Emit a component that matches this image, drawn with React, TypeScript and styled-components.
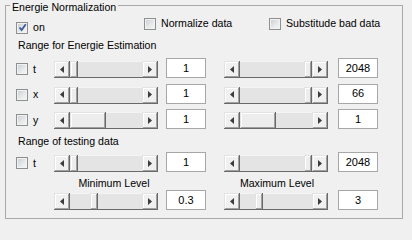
import styled, { createGlobalStyle } from 'styled-components';

const TRACK = 72;

const GlobalStyle = createGlobalStyle`
  html, body {
    margin: 0;
    padding: 0;
    background: #f0f0f0;
  }
  body {
    font-family: "Liberation Sans", Arial, sans-serif;
    font-size: 10.6px;
    color: #000;
    overflow: hidden;
  }
`;

const Page = styled.div`
  display: flow-root;
  width: 412px;
  height: 226px;
  padding-left: 5px;
  box-sizing: border-box;
`;

const Frame = styled.fieldset`
  width: 398px;
  min-width: 0;
  box-sizing: border-box;
  margin: -3px 0 0 0;
  padding: 0 0 8px 0;
  border: 1px solid #a9a9a9;
`;

const Legend = styled.legend`
  margin-left: 4px;
  padding: 4px 2px 0;
  line-height: 12px;
`;

const OptionsRow = styled.div`
  display: grid;
  grid-template-columns: 128px 125px auto;
  align-items: start;
  padding-left: 10px;
`;

const Option = styled.label<{ $drop: number }>`
  display: flex;
  align-items: center;
  gap: 5px;
  margin-top: ${(p) => p.$drop}px;
  line-height: 13px;
`;

const Box = styled.span`
  flex: none;
  width: 12px;
  height: 12px;
  box-sizing: border-box;
  border: 1px solid #8e8f8f;
  background: linear-gradient(135deg, #c9ccd1 0%, #e8eaec 60%, #f6f6f6 100%);
  box-shadow: inset 0 0 0 1px #f2f2f2;
  display: flex;
  align-items: center;
  justify-content: center;
`;

const SectionLabel = styled.div<{ $top: number }>`
  margin-top: ${(p) => p.$top}px;
  padding-left: 12px;
  line-height: 13px;
`;

const SliderGrid = styled.div<{ $top: number }>`
  display: grid;
  grid-template-columns: 38px 112px 58px 114px 40px;
  grid-auto-rows: 20px;
  row-gap: 5.5px;
  margin-top: ${(p) => p.$top}px;
  padding-left: 10px;
`;

const RowLabel = styled.label`
  display: flex;
  align-items: center;
  gap: 5px;
  line-height: 13px;
  margin-top: 2px;
`;

const Bar = styled.div`
  align-self: end;
  display: flex;
  width: 104px;
  height: 17px;
`;

const Arrow = styled.div`
  flex: none;
  width: 16px;
  height: 17px;
  box-sizing: border-box;
  background: #f0f0f0;
  box-shadow: inset -1px -1px 0 #696969, inset 1px 1px 0 #e3e3e3,
    inset -2px -2px 0 #a0a0a0, inset 2px 2px 0 #fff;
  display: flex;
  align-items: center;
  justify-content: center;
  padding-bottom: 1px;

  svg {
    fill: #3c3c3c;
  }
`;

const Track = styled.div`
  position: relative;
  flex: 1;
  background: #e4e4e4;
  box-shadow: inset 0 -1px 0 #696969, inset 0 1px 0 #f4f4f4;
`;

const Thumb = styled.div`
  position: absolute;
  top: 0;
  bottom: 0;
  box-sizing: border-box;
  background: #ededed;
  box-shadow: inset -1px -1px 0 #696969, inset 1px 1px 0 #e3e3e3,
    inset -2px -2px 0 #a0a0a0, inset 2px 2px 0 #fff;
`;

const Edit = styled.div`
  width: 40px;
  height: 20px;
  box-sizing: border-box;
  background: #fff;
  border: 1px solid #a7a7a7;
  display: flex;
  align-items: center;
  justify-content: center;
  font-size: 11px;
  line-height: 13px;
`;

const LevelGrid = styled.div`
  display: grid;
  grid-template-columns: 38px 112px 58px 114px 40px;
  grid-template-rows: 12px 20px;
  row-gap: 1px;
  margin-top: 5px;
  padding-left: 10px;
`;

const LevelLabel = styled.div<{ $col: number; $shift: number }>`
  grid-column: ${(p) => p.$col};
  grid-row: 1;
  width: 104px;
  text-align: center;
  line-height: 12px;
  transform: translateX(${(p) => p.$shift}px);
`;

const LevelCell = styled.div<{ $col: number }>`
  grid-column: ${(p) => p.$col};
  grid-row: 2;
  display: flex;
  align-items: flex-end;
`;

type Thumbing = { pos: number; size: number };

function Check({ checked }: { checked?: boolean }) {
  return (
    <Box>
      {checked && (
        <svg width="9" height="9" viewBox="0 0 9 9">
          <path d="M1.5 4.5 L3.6 7 L7.8 1.2" stroke="#3a5a98" strokeWidth="1.8" fill="none" />
        </svg>
      )}
    </Box>
  );
}

function ScrollBar({ pos, size }: Thumbing) {
  const left = Math.round(pos * (TRACK - size));
  return (
    <Bar>
      <Arrow>
        <svg width="4" height="7" viewBox="0 0 4 7">
          <polygon points="4,0 0,3.5 4,7" />
        </svg>
      </Arrow>
      <Track>
        <Thumb style={{ left, width: size }} />
      </Track>
      <Arrow>
        <svg width="4" height="7" viewBox="0 0 4 7">
          <polygon points="0,0 4,3.5 0,7" />
        </svg>
      </Arrow>
    </Bar>
  );
}

type Row = { name: string; left: Thumbing; min: string; right: Thumbing; max: string };

const estimation: Row[] = [
  { name: 't', left: { pos: 0, size: 8 }, min: '1', right: { pos: 1, size: 8 }, max: '2048' },
  { name: 'x', left: { pos: 0, size: 8 }, min: '1', right: { pos: 1, size: 8 }, max: '66' },
  { name: 'y', left: { pos: 0, size: 36 }, min: '1', right: { pos: 0, size: 36 }, max: '1' },
];

const testing: Row[] = [
  { name: 't', left: { pos: 0, size: 8 }, min: '1', right: { pos: 1, size: 8 }, max: '2048' },
];

function SliderRow({ row }: { row: Row }) {
  return (
    <>
      <RowLabel>
        <Check />
        {row.name}
      </RowLabel>
      <ScrollBar {...row.left} />
      <Edit>{row.min}</Edit>
      <ScrollBar {...row.right} />
      <Edit>{row.max}</Edit>
    </>
  );
}

export default function App() {
  return (
    <Page>
      <GlobalStyle />
      <Frame>
        <Legend>Energie Normalization</Legend>
        <OptionsRow>
          <Option $drop={8}>
            <Check checked />
            on
          </Option>
          <Option $drop={4}>
            <Check />
            Normalize data
          </Option>
          <Option $drop={4}>
            <Check />
            Substitude bad data
          </Option>
        </OptionsRow>

        <SectionLabel $top={5}>Range for Energie Estimation</SectionLabel>
        <SliderGrid $top={6}>
          {estimation.map((row) => (
            <SliderRow key={row.name} row={row} />
          ))}
        </SliderGrid>

        <SectionLabel $top={6}>Range of testing data</SectionLabel>
        <SliderGrid $top={4}>
          {testing.map((row) => (
            <SliderRow key={row.name} row={row} />
          ))}
        </SliderGrid>

        <LevelGrid>
          <LevelLabel $col={2} $shift={8}>Minimum Level</LevelLabel>
          <LevelLabel $col={4} $shift={1}>Maximum Level</LevelLabel>
          <LevelCell $col={2}>
            <ScrollBar pos={0.31} size={8} />
          </LevelCell>
          <LevelCell $col={3}>
            <Edit>0.3</Edit>
          </LevelCell>
          <LevelCell $col={4}>
            <ScrollBar pos={0.23} size={8} />
          </LevelCell>
          <LevelCell $col={5}>
            <Edit>3</Edit>
          </LevelCell>
        </LevelGrid>
      </Frame>
    </Page>
  );
}
